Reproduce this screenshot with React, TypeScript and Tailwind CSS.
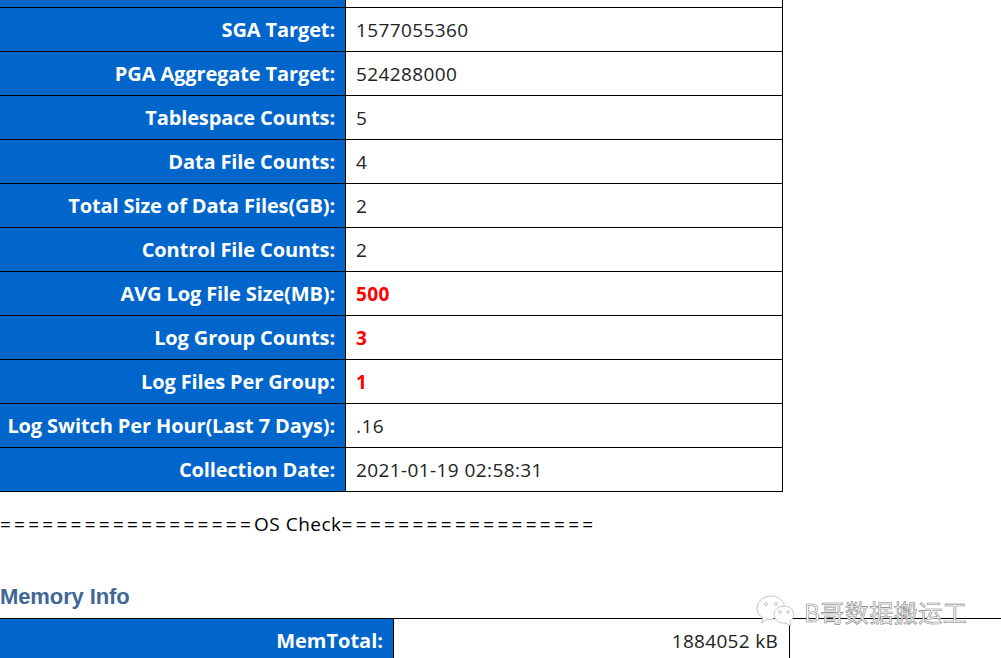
const rows: { label: string; value: string; alert?: boolean }[] = [
  { label: 'SGA Target:', value: '1577055360' },
  { label: 'PGA Aggregate Target:', value: '524288000' },
  { label: 'Tablespace Counts:', value: '5' },
  { label: 'Data File Counts:', value: '4' },
  { label: 'Total Size of Data Files(GB):', value: '2' },
  { label: 'Control File Counts:', value: '2' },
  { label: 'AVG Log File Size(MB):', value: '500', alert: true },
  { label: 'Log Group Counts:', value: '3', alert: true },
  { label: 'Log Files Per Group:', value: '1', alert: true },
  { label: 'Log Switch Per Hour(Last 7 Days):', value: '.16' },
  { label: 'Collection Date:', value: '2021-01-19 02:58:31' },
];

function WechatIcon() {
  return (
    <svg width="38" height="34" viewBox="0 0 38 34" fill="none" stroke="#c4c4c4" strokeWidth="1">
      <path d="M17 24c-2 .6-4 .7-6 .3L6 28l.8-5.2C3 20.400 1 17 1 13.500 1 6.600 7.500 1 15 1c6.500 0 12 4 13.500 9.500" fill="#ffffff" />
      <circle cx="10" cy="9" r="1.500" />
      <circle cx="20" cy="9" r="1.500" />
      <path d="M28 11c5.500 0 9.500 4 9.500 8.500 0 2.800-1.500 5-3.500 6.800l.8 4.700-4.800-3c-.9.2-1.500.2-2 .2-5.500 0-10-3.800-10-8.700S22.500 11 28 11z" fill="#ffffff" />
      <circle cx="24" cy="17" r="1.300" />
      <circle cx="32" cy="17" r="1.300" />
    </svg>
  );
}

export default function App() {
  return (
    <div className="relative h-[658px] w-[1001px] overflow-hidden bg-white font-['Open_Sans','Noto_Sans',sans-serif] text-black">
      <div className="w-[783px] border-r border-black">
        <div className="flex h-[8px] border-b border-black">
          <div className="w-[345px] bg-[#0066cc]" />
          <div className="flex-1 border-l border-black" />
        </div>
        {rows.map((row) => (
          <div key={row.label} className="flex h-[44px] border-b border-black">
            <div className="flex w-[345px] items-center justify-end bg-[#0066cc] pr-[10px] text-[20px] font-bold tracking-[-0.12px] text-white">
              {row.label}
            </div>
            <div
              className={`flex flex-1 items-center border-l border-black pt-[1px] pl-[10px] text-[19px] tracking-[0.4px] ${
                row.alert ? 'font-bold text-[#ff0000]' : 'text-[#222222]'
              }`}
            >
              {row.value}
            </div>
          </div>
        ))}
      </div>

      <div className="mt-[19px] h-[26px] text-[19px] leading-[26px] tracking-[0.5px]">
        <span className="tracking-[3.25px]">==================</span>OS Check
        <span className="tracking-[3.3px]">==================</span>
      </div>

      <h3 className="mt-[47px] h-[26px] font-['Liberation_Sans',sans-serif] text-[22px] leading-[26px] font-bold tracking-[-0.1px] text-[#3f6796]">
        Memory Info
      </h3>

      <div className="mt-[8px] flex h-[40px] border-t border-black">
        <div className="flex w-[393px] items-center justify-end bg-[#0066cc] pt-[5px] pr-[10px] text-[20px] font-bold text-white">
          MemTotal:
        </div>
        <div className="flex w-[397px] items-center justify-end border-x border-black pt-[5px] pr-[11px] text-[19px] tracking-[0.3px] text-[#222222]">
          1884052 kB
        </div>
      </div>

      <div className="absolute top-[595px] left-[756px] flex items-center gap-[10px]">
        <WechatIcon />
        <span className="font-['Noto_Sans_CJK_SC',sans-serif] text-[24px] leading-[26px] tracking-[0.5px] text-white [-webkit-text-stroke:0.6px_#808080]">
          B哥数据搬运工
        </span>
      </div>
    </div>
  );
}
